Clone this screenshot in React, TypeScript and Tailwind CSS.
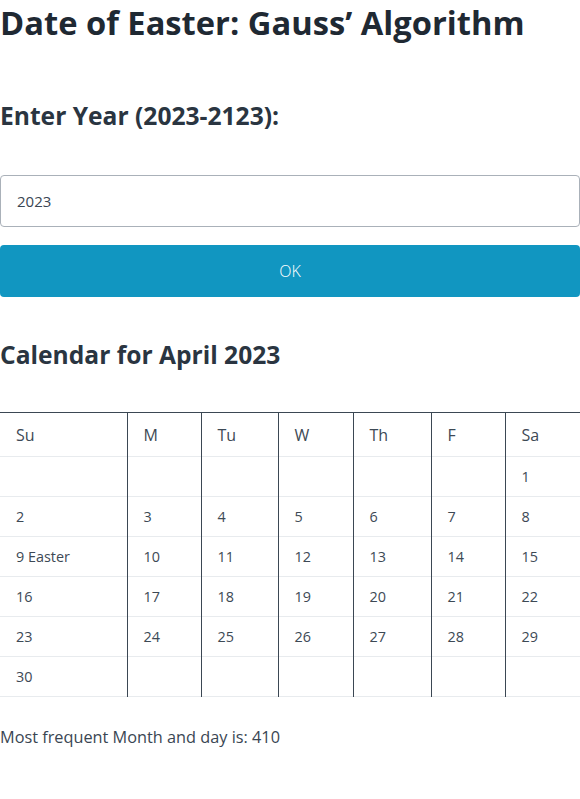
import { useState } from "react";

const days = ["Su", "M", "Tu", "W", "Th", "F", "Sa"];
const colWidths = ["w-[127px]", "w-[74px]", "w-[77px]", "w-[75px]", "w-[78px]", "w-[74px]", "w-[75px]"];

const weeks: string[][] = [
  ["", "", "", "", "", "", "1"],
  ["2", "3", "4", "5", "6", "7", "8"],
  ["9 Easter", "10", "11", "12", "13", "14", "15"],
  ["16", "17", "18", "19", "20", "21", "22"],
  ["23", "24", "25", "26", "27", "28", "29"],
  ["30", "", "", "", "", "", ""],
];

export default function App() {
  const [year, setYear] = useState("2023");

  return (
    <div className="bg-white text-[#212b36] font-['Open_Sans',sans-serif]">
      <h1 className="pt-[3px] text-[32.7px] font-bold leading-[40px] text-[#1f2933]">
        Date of Easter: Gauss’ Algorithm
      </h1>

      <h2 className="mt-[55px] text-[24.6px] font-bold leading-[36px] text-[#2a3541]">
        Enter Year (2023-2123):
      </h2>

      <input
        value={year}
        onChange={(e) => setYear(e.target.value)}
        className="mt-[41px] block h-[52px] w-full rounded border border-[#aab1b9] bg-white px-4 text-[15px] text-[#3a4653] outline-none"
      />

      <button
        type="button"
        className="mt-[18px] block h-[52px] w-full rounded bg-[#1196c1] text-[16px] font-light text-white"
      >
        OK
      </button>

      <h2 className="mt-[40px] text-[24.6px] font-bold leading-[36px] text-[#2a3541]">
        Calendar for April 2023
      </h2>

      <table className="mt-[39px] w-full border-collapse border-t border-[#3b4753] text-[#3d4955]">
        <thead>
          <tr className="h-[44px] border-b border-[#e8ebee]">
            {days.map((d, i) => (
              <th
                key={d}
                className={`${colWidths[i]} px-4 text-left text-[16px] font-normal ${i > 0 ? "border-l border-[#3b4753]" : ""}`}
              >
                {d}
              </th>
            ))}
          </tr>
        </thead>
        <tbody>
          {weeks.map((week, r) => (
            <tr key={r} className="h-[40px] border-b border-[#e8ebee]">
              {week.map((day, i) => (
                <td
                  key={i}
                  className={`px-4 pt-[1px] text-[14.4px] ${i > 0 ? "border-l border-[#3b4753]" : ""}`}
                >
                  {day}
                </td>
              ))}
            </tr>
          ))}
        </tbody>
      </table>

      <p className="mt-[28px] text-[16.3px] text-[#3a4653]">Most frequent Month and day is: 410</p>
    </div>
  );
}
